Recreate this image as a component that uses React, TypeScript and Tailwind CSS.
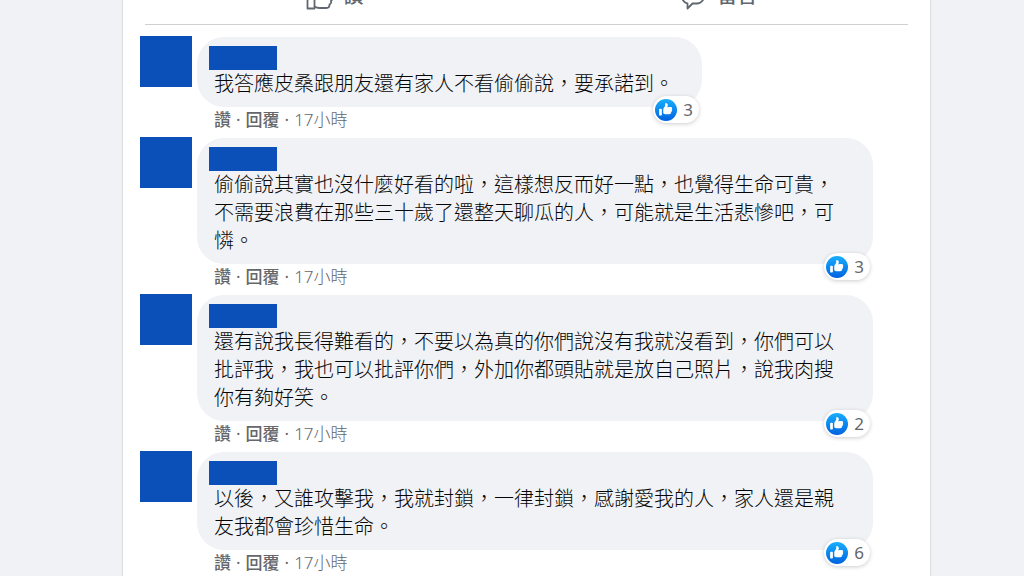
type Comment = { id: number; text: string; time: string; likes: number };

const comments: Comment[] = [
  { id: 1, text: "我答應皮桑跟朋友還有家人不看偷偷說，要承諾到。", time: "17小時", likes: 3 },
  {
    id: 2,
    text: "偷偷說其實也沒什麼好看的啦，這樣想反而好一點，也覺得生命可貴，不需要浪費在那些三十歲了還整天聊瓜的人，可能就是生活悲慘吧，可憐。",
    time: "17小時",
    likes: 3,
  },
  {
    id: 3,
    text: "還有說我長得難看的，不要以為真的你們說沒有我就沒看到，你們可以批評我，我也可以批評你們，外加你都頭貼就是放自己照片，說我肉搜你有夠好笑。",
    time: "17小時",
    likes: 2,
  },
  {
    id: 4,
    text: "以後，又誰攻擊我，我就封鎖，一律封鎖，感謝愛我的人，家人還是親友我都會珍惜生命。",
    time: "17小時",
    likes: 6,
  },
];

function ThumbOutline() {
  return (
    <svg className="size-7" viewBox="0 0 28 28" fill="none" stroke="#606770" strokeWidth="1.8" strokeLinejoin="round" aria-hidden="true">
      <path d="M1.500 11.500h7V26.500h-7z" />
      <path d="M8.500 12.500c3-2 4.500-5 4.500-9 0-1.500 4.500-2 4.500 3 0 2-.7 3.500-1 4.500h7c2.500 0 3.500 2.500 2 4.200 1 1.300.8 3-.6 3.800.6 1.500 0 2.800-1.300 3.300 0 2-1 3.700-3.100 3.700h-7c-2 0-3.500-.5-5-1.500" />
    </svg>
  );
}

function BubbleOutline() {
  return (
    <svg className="size-7" viewBox="0 0 28 28" fill="none" stroke="#606770" strokeWidth="1.8" strokeLinejoin="round" aria-hidden="true">
      <path d="M10 3h8c4.500 0 7.500 3.700 7.500 9s-3 9.500-7.500 9.500h-4.500L8.500 26.500V21.500C5 21 2.500 17 2.500 12 2.500 6.700 5.500 3 10 3z" />
    </svg>
  );
}

function LikeBadge() {
  return (
    <svg className="size-[22px]" viewBox="0 0 16 16" aria-hidden="true">
      <defs>
        <linearGradient id="like-blue" x1="0" y1="0" x2="0" y2="1">
          <stop offset="0" stopColor="#18affe" />
          <stop offset="1" stopColor="#0062df" />
        </linearGradient>
      </defs>
      <circle cx="8" cy="8" r="8" fill="url(#like-blue)" />
      <path
        fill="#fff"
        d="M12.162 7.338c.176.123.338.245.338.674 0 .43-.229.604-.474.725.1.163.132.36.089.546-.077.344-.392.611-.672.69.121.194.159.385.015.62-.185.295-.346.407-1.058.407H7.500c-.988 0-1.500-.546-1.500-1V7.665c0-1.230 1.467-2.275 1.467-3.130L7.361 3.470c-.005-.065.008-.224.058-.270.080-.079.301-.200.635-.200.218 0 .363.041.534.123.581.277.732.978.732 1.542 0 .271-.414 1.083-.470 1.364 0 0 .867-.192 1.879-.199 1.061-.006 1.749.190 1.749.842 0 .261-.219.523-.316.666zM3.600 7h.800a.600.600 0 0 1 .600.600v3.800a.600.600 0 0 1-.600.600h-.800a.600.600 0 0 1-.600-.600V7.600a.600.600 0 0 1 .600-.600z"
      />
    </svg>
  );
}

function CommentItem({ comment }: { comment: Comment }) {
  return (
    <li className="flex items-start gap-[5px]">
      <div className="h-[51px] w-[52px] shrink-0 bg-[#0b50b9]" />
      <div className="flex min-w-0 flex-col items-start pt-px">
        <div className="relative rounded-[27px] bg-[#f0f2f5] pt-[9px] pr-7 pb-[9px] pl-3">
          <div className="h-6 w-[68px] bg-[#0b50b9]" />
          <p className="pl-[5px] text-[20px] leading-[28px] font-light text-[#050505]">{comment.text}</p>
          <button
            type="button"
            aria-label={`${comment.likes} 個讚`}
            className="absolute right-[3px] -bottom-4 flex h-[27px] items-center gap-[6px] rounded-full bg-white pr-[6px] pl-[2px] text-[17px] leading-[27px] text-[#65676b] shadow-[0_1px_4px_rgba(0,0,0,0.2)]"
          >
            <LikeBadge />
            <span>{comment.likes}</span>
          </button>
        </div>
        <div className="mb-1 flex h-[26px] items-center gap-[5px] pl-[17px] text-[17px] leading-[26px] text-[#65676b]">
          <button type="button" className="font-medium">讚</button>
          <span>·</span>
          <button type="button" className="font-medium">回覆</button>
          <span>·</span>
          <a href="#" className="font-light">{comment.time}</a>
        </div>
      </div>
    </li>
  );
}

export default function App() {
  return (
    <div lang="zh-Hant" className="h-screen overflow-hidden bg-[#f0f2f5] pr-[94px] pl-[123px] font-['Noto_Sans','Noto_Sans_CJK_TC',sans-serif]">
      <main className="min-h-full bg-white shadow-[0_0_2px_rgba(0,0,0,0.25)]">
        <div className="mr-[22px] ml-[22px] flex h-[25px] items-end overflow-hidden border-b border-[#ced0d4] pb-[14px] text-[20px] leading-[28px] font-medium text-[#606770]">
          <button type="button" className="flex flex-1 items-center justify-center gap-[10px] pr-1">
            <ThumbOutline />
            <span>讚</span>
          </button>
          <button type="button" className="flex flex-1 items-center justify-center gap-[10px]">
            <BubbleOutline />
            <span>留言</span>
          </button>
        </div>
        <ul className="flex flex-col pt-[11px] pr-[57px] pl-[17px]">
          {comments.map((c) => (
            <CommentItem key={c.id} comment={c} />
          ))}
        </ul>
      </main>
    </div>
  );
}
